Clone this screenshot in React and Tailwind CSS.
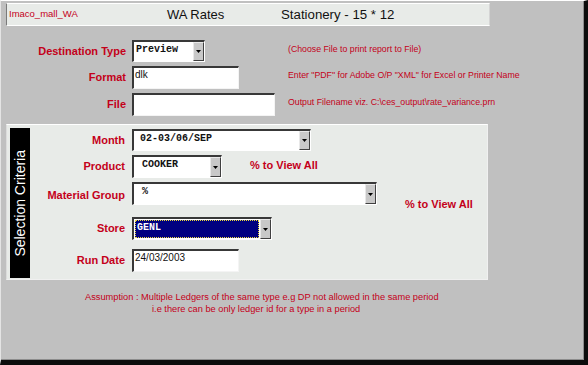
import React from "react";

const Arrow = () => (
  <span className="flex w-[11px] shrink-0 items-center justify-center self-stretch border-l border-t border-l-[#e8e8e8] border-t-[#e8e8e8] border-r border-b border-r-[#404040] border-b-[#404040] bg-[#c8c8c8]">
    <svg width="5" height="3" viewBox="0 0 5 3">
      <path d="M0 0h5L2.5 3z" fill="#000" />
    </svg>
  </span>
);

const Select = ({ w, h = "h-[23px]", value, pad = "pl-[6px]", store }) => (
  <div
    className={`flex ${w} ${h} shrink-0 border-t-2 border-l-2 border-[#383838] border-r border-b border-r-white border-b-white bg-white`}
  >
    {store ? (
      <div className="m-[1px] flex-1 border border-dotted border-[#e8d840] bg-[#000080] pl-[1px] font-['Liberation_Mono',monospace] text-[10px] font-bold leading-[13px] text-white">
        {value}
      </div>
    ) : (
      <div
        className={`flex-1 ${pad} pt-[2px] font-['Liberation_Mono',monospace] text-[10px] font-bold leading-[12px] text-[#111]`}
      >
        {value}
      </div>
    )}
    <Arrow />
  </div>
);

const Input = ({ w, value }) => (
  <div
    className={`${w} h-[23px] shrink-0 border-t-2 border-l-2 border-[#383838] border-r border-b border-r-[#f4f4f4] border-b-[#f4f4f4] bg-white pl-[1px] pt-[1px] text-[10px] leading-[12px] text-[#111]`}
  >
    {value}
  </div>
);

const Label = ({ children, w = "w-[121px]" }) => (
  <div className={`${w} shrink-0 pr-[1px] text-right text-[11px] font-bold text-[#c4001a]`}>
    {children}
  </div>
);

const Hint = ({ children }) => (
  <div className="-mt-[3px] text-[8.75px] text-[#c4001a]">{children}</div>
);

export default function App() {
  return (
    <div className="h-[365px] w-[588px] border-l border-t border-l-[#e4e4e4] border-t-white border-r-4 border-b-[5px] border-r-[#0c0c0c] border-b-[#0c0c0c] bg-[#c0c0c0] font-['Liberation_Sans',Arial,sans-serif]">
      <div className="h-full border-r border-b border-[#8c8c8c] pl-[5px] pt-[2px]">
        {/* Title bar */}
        <div className="flex h-[23px] w-[484px] items-center border-l border-t border-b border-r border-l-[#7a7a7a] border-t-white border-b-white border-r-[#d4d4d4] bg-[#e8ebe8] pl-[2px]">
          <span className="w-[158px] text-[9.5px] text-[#c4001a]">Imaco_mall_WA</span>
          <span className="w-[114px] text-[13px] text-[#111]">WA Rates</span>
          <span className="text-[13.25px] text-[#111]">Stationery - 15 * 12</span>
        </div>

        {/* Output options */}
        <div className="mt-[14px] flex h-[22px] items-center gap-[5px]">
          <Label>Destination Type</Label>
          <div className="w-[151px] shrink-0">
            <Select w="w-[73px]" h="h-[22px]" value="Preview" pad="pl-[2px]" />
          </div>
          <Hint>(Choose File to print report to File)</Hint>
        </div>
        <div className="mt-[4px] flex h-[23px] items-center gap-[5px]">
          <Label>Format</Label>
          <div className="w-[151px] shrink-0">
            <Input w="w-[107px]" value="dlk" />
          </div>
          <Hint>Enter "PDF" for Adobe O/P "XML" for Excel or Printer Name</Hint>
        </div>
        <div className="mt-[4px] flex h-[23px] items-center gap-[5px]">
          <Label>File</Label>
          <div className="w-[151px] shrink-0">
            <Input w="w-[143px]" value="" />
          </div>
          <Hint>Output Filename viz. C:\ces_output\rate_variance.prn</Hint>
        </div>

        {/* Selection criteria panel */}
        <div className="mt-[8px] flex h-[156px] w-[482px] border border-t-white border-l-[#dcdcdc] border-r-[#f0f0f0] border-b-[#f0f0f0] bg-[#e8ebe8] pl-[3px] pt-[3px]">
          <div className="flex h-[150px] w-[20px] shrink-0 items-center justify-center bg-black">
            <span className="rotate-180 text-[14px] leading-none whitespace-nowrap text-white [writing-mode:vertical-rl]">
              Selection Criteria
            </span>
          </div>
          <div className="flex flex-col">
            <div className="mt-[1px] flex h-[22px] items-center gap-[6px]">
              <Label w="w-[96px]">Month</Label>
              <Select w="w-[179px]" h="h-[22px]" value="02-03/06/SEP" />
            </div>
            <div className="mt-[4px] flex h-[23px] items-center gap-[6px]">
              <Label w="w-[96px]">Product</Label>
              <Select w="w-[90px]" value="COOKER" pad="pl-[8px]" />
              <span className="ml-[22px] -mt-[3px] text-[11px] font-bold text-[#c4001a]">% to View All</span>
            </div>
            <div className="mt-[4px] flex h-[23px] items-start gap-[6px]">
              <Label w="w-[96px]">
                <div className="mt-[5px]">Material Group</div>
              </Label>
              <Select w="w-[245px]" value="%" pad="pl-[8px]" />
              <span className="ml-[22px] mt-[14px] text-[11px] font-bold whitespace-nowrap text-[#c4001a]">% to View All</span>
            </div>
            <div className="mt-[12px] flex h-[23px] items-center gap-[6px]">
              <Label w="w-[96px]">Store</Label>
              <Select w="w-[140px]" value="GENL" store />
            </div>
            <div className="mt-[9px] flex h-[23px] items-center gap-[6px]">
              <Label w="w-[96px]">Run Date</Label>
              <Input w="w-[107px]" value="24/03/2003" />
            </div>
          </div>
        </div>

        {/* Note */}
        <div className="mt-[11px] text-[9.25px] leading-[12px] text-[#c4001a]">
          <div className="ml-[79px]">
            Assumption : Multiple Ledgers of the same type e.g DP not allowed in the same period
          </div>
          <div className="ml-[146px]">
            i.e there can be only ledger id for a type in a period
          </div>
        </div>
      </div>
    </div>
  );
}
